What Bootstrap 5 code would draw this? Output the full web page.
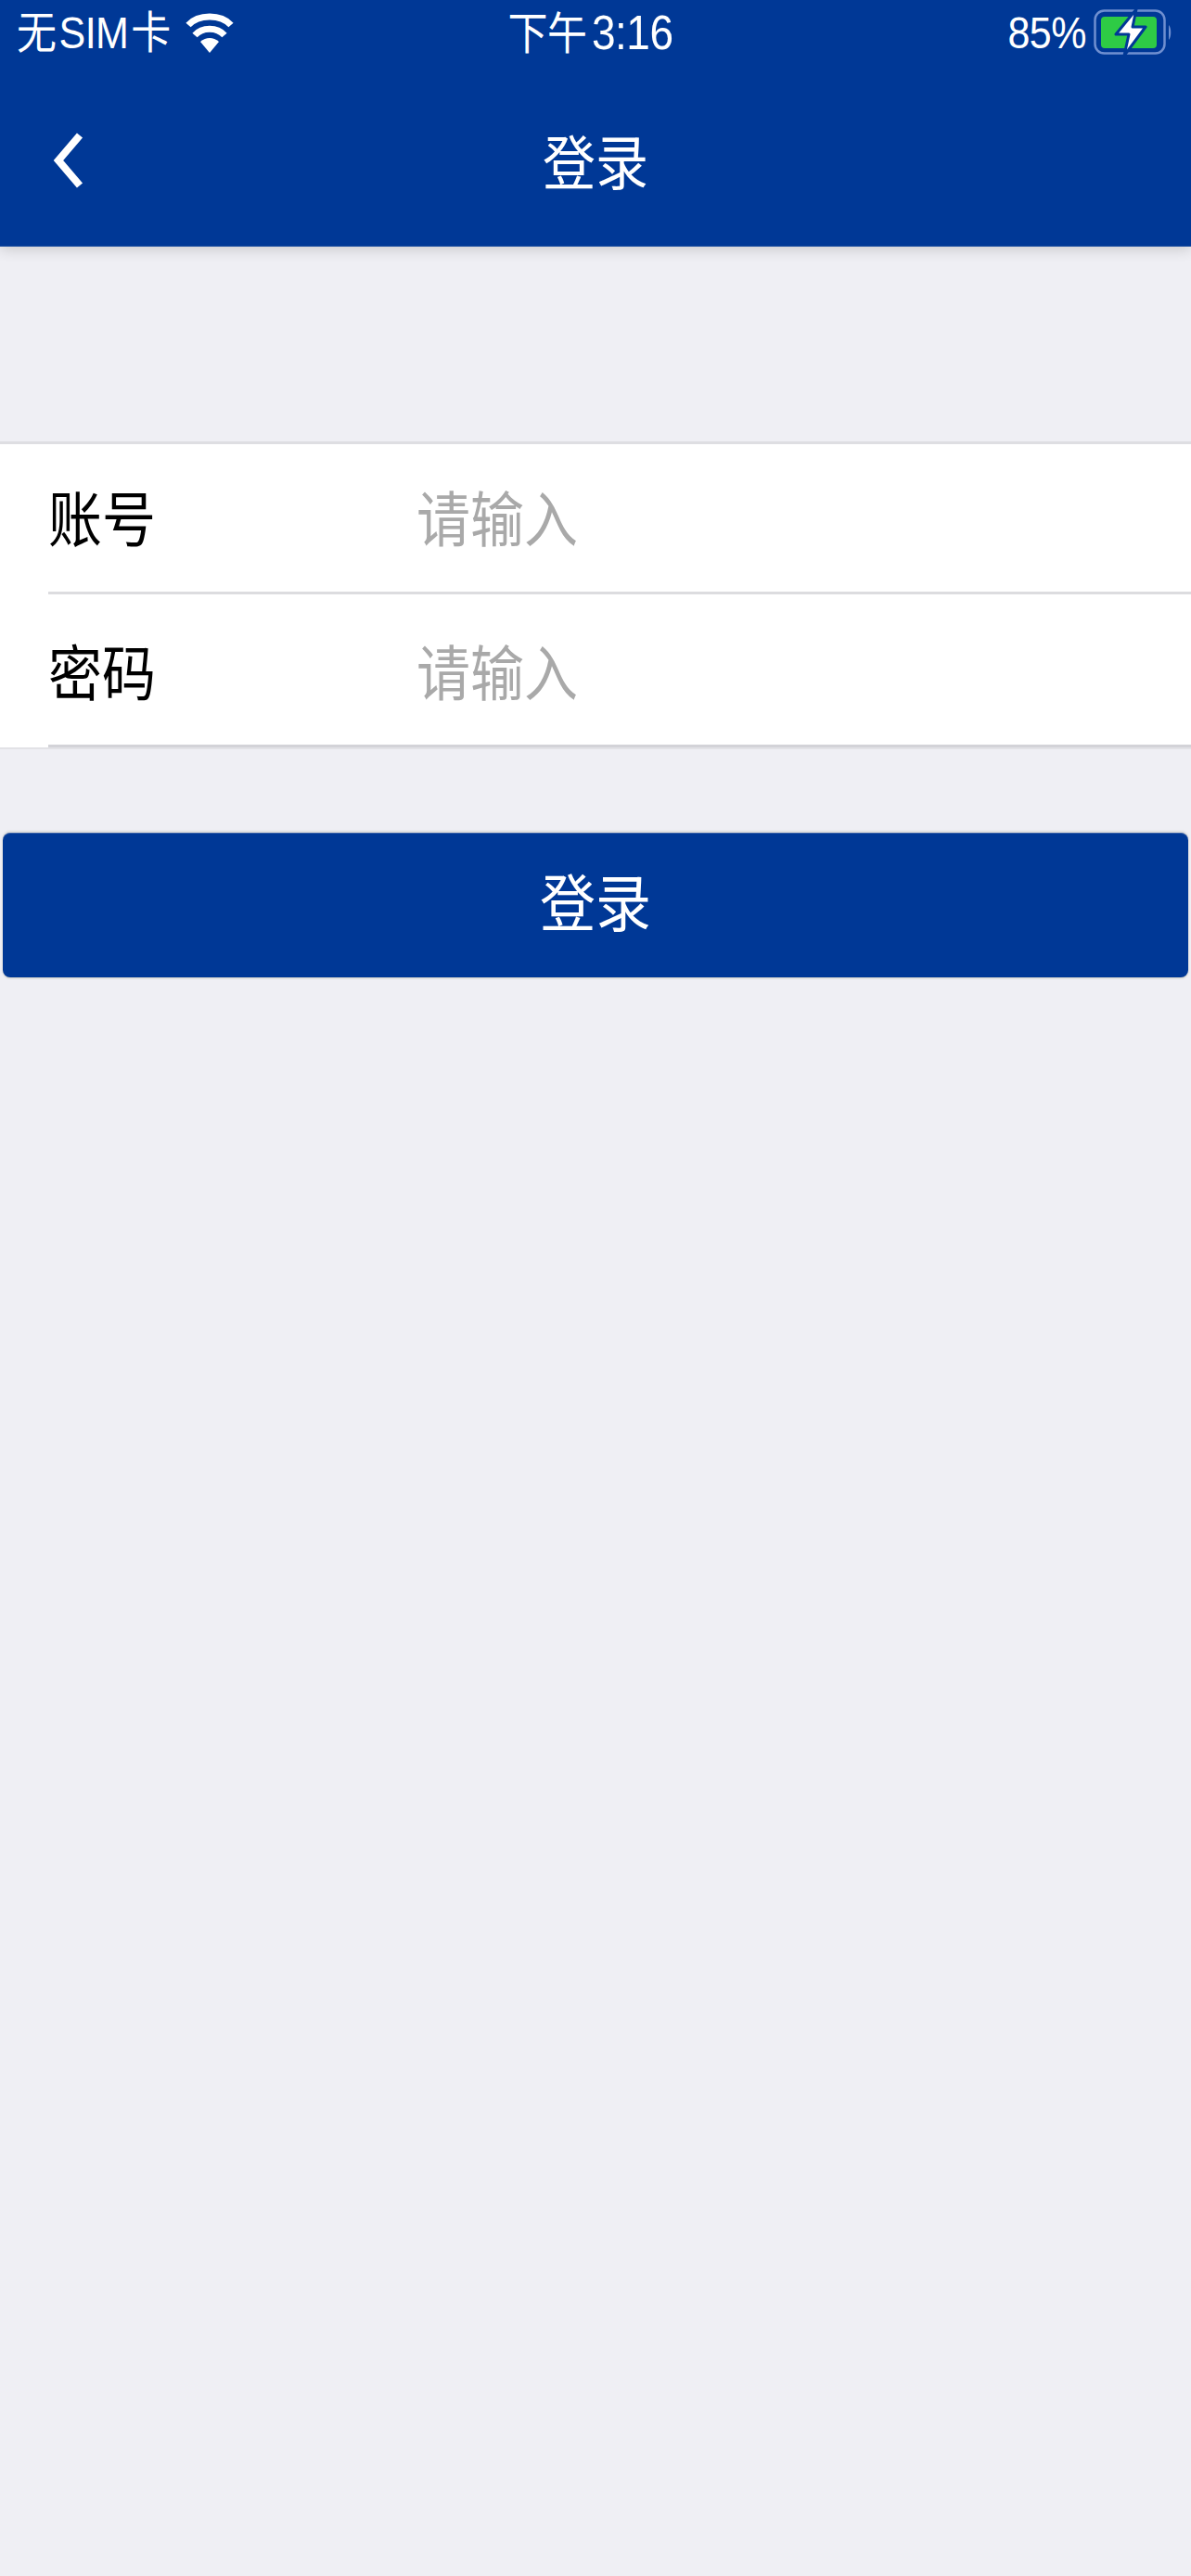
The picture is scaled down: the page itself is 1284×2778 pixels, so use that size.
<!DOCTYPE html>
<html lang="zh">
<head>
<meta charset="utf-8">
<title>登录</title>
<link rel="stylesheet" href="https://cdn.jsdelivr.net/npm/bootstrap@5.3.0/dist/css/bootstrap.min.css">
<style>
html,body{height:100%}
body{background:#efeff4;font-family:"Liberation Sans","Noto Sans CJK SC",sans-serif;min-height:2778px}
.tall{display:inline-block;transform:scaleY(1.12);transform-origin:center}
.app-head{background:#003896;color:#fff;box-shadow:0 3px 14px rgba(0,0,0,.16);border-bottom:1px solid #1d4f9f}
.status-bar{height:70px;padding:0 17px 0 18px;font-size:43px;line-height:1;letter-spacing:-.5px}
.status-l{width:412px}
.status-r{width:424px}
.sim-text{word-spacing:-8.5px}
.time-text{word-spacing:-6px}
.time-num{font-size:46px}
.nav-line{height:195px;padding:24px 0 0 56px}
.nav-title{font-size:57px;line-height:1}
.back-link{color:#fff;width:40px;z-index:1;margin-bottom:14px}
.nav-title-wrap{left:0;right:0;top:20px;bottom:0}
.form-block{margin-top:210px;background:#fff;border-top:3px solid #dedee2;border-bottom:2px solid #e2e2e6}
.form-row{height:162px;margin-left:52px;border-bottom:3px solid #dcdcdf;padding-top:6px}
.form-row:last-child{height:165px;border-bottom-color:#d3d3d8;padding-top:12px}
.form-label-t{width:397px;font-size:58px;line-height:1;color:#000;margin:0}
.form-input-t{font-size:58px;line-height:1.2;padding:0;border:0;background:transparent;box-shadow:none;transform:scaleY(1.12);border-radius:0}
.form-input-t::placeholder{color:#a9a9a9;opacity:1}
.submit-wrap{padding:90px 3px 0}
.btn-submit{height:156px;width:100%;background:#003896;border:0;border-top:1px solid #3a62a8;border-radius:8px;color:#fff;font-size:60px;line-height:1;box-shadow:0 -2px 2px #dcdcdc,0 1px 2px #c9c9c0}
.btn-submit:hover,.btn-submit:active{background:#003896!important;color:#fff!important}
</style>
</head>
<body>
<header class="app-head">
  <div class="status-bar d-flex align-items-center justify-content-between">
    <div class="status-l d-flex align-items-center gap-3">
      <span class="tall sim-text">无 SIM 卡</span>
      <svg width="52" height="44" viewBox="0 0 52 44" aria-hidden="true"><path d="M26 44 16 32C22 26.500 30 26.500 36 32Z" fill="#fff"/><path d="M10 25C18 16 34 16 42 25" fill="none" stroke="#fff" stroke-width="7"/><path d="M3 14C14 2 38 2 49 14" fill="none" stroke="#fff" stroke-width="7"/></svg>
    </div>
    <span class="tall time-text">下午 <span class="time-num">3:16</span></span>
    <div class="status-r d-flex align-items-center justify-content-end gap-2">
      <span class="tall">85%</span>
      <svg width="88" height="50" viewBox="0 0 88 50" aria-hidden="true">
        <rect x="1.500" y="1.500" width="75" height="46" rx="10" fill="none" stroke="#6f8fd0" stroke-width="2.500"/>
        <rect x="8" y="8" width="60" height="34" rx="4" fill="#2ecb45"/>
        <path d="M81 17c3 3 3 13 0 16z" fill="#6f8fd0"/>
        <path d="M46 0 24 27h14l-5 23 23-31H42z" fill="#fff" stroke="#003896" stroke-width="3" stroke-linejoin="round"/>
      </svg>
    </div>
  </div>
  <div class="nav-line position-relative d-flex align-items-center">
    <a href="#" class="back-link" aria-label="返回">
      <svg class="d-block" width="36" height="64" viewBox="0 0 36 64"><path d="M30 5 7 32l23 27" fill="none" stroke="#fff" stroke-width="8"/></svg>
    </a>
    <div class="nav-title-wrap position-absolute d-flex align-items-center justify-content-center">
      <span class="nav-title tall">登录</span>
    </div>
  </div>
</header>
<main>
  <form>
    <div class="form-block">
      <div class="form-row d-flex align-items-center">
        <label class="form-label-t" for="acct"><span class="tall">账号</span></label>
        <input id="acct" class="form-control form-input-t flex-fill w-auto" placeholder="请输入">
      </div>
      <div class="form-row d-flex align-items-center">
        <label class="form-label-t" for="pwd"><span class="tall">密码</span></label>
        <input id="pwd" type="text" class="form-control form-input-t flex-fill w-auto" placeholder="请输入">
      </div>
    </div>
    <div class="submit-wrap">
      <button type="button" class="btn btn-submit d-flex align-items-center justify-content-center"><span class="tall">登录</span></button>
    </div>
  </form>
</main>
<script src="https://cdn.jsdelivr.net/npm/bootstrap@5.3.0/dist/js/bootstrap.bundle.min.js"></script>
</body>
</html>
